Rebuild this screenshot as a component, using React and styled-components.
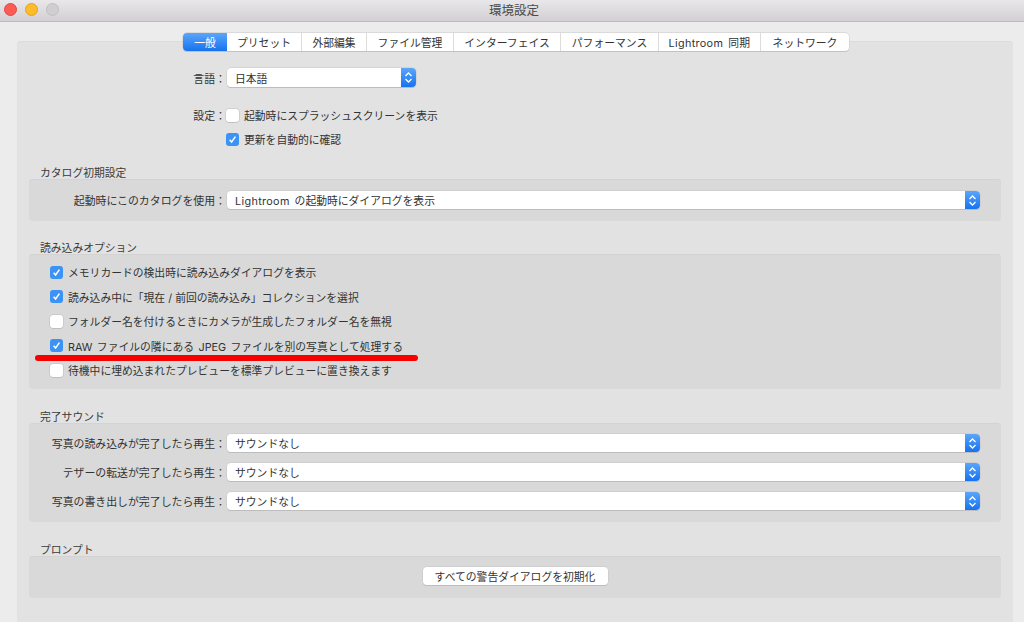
import React from 'react';
import styled, { createGlobalStyle } from 'styled-components';

const GlobalStyle = createGlobalStyle`
  html, body {
    margin: 0;
    padding: 0;
    background: #ececec;
  }
  * {
    box-sizing: border-box;
  }
`;

const fontStack = `'Inter', 'Noto Sans CJK JP', sans-serif`;

const Window = styled.div`
  display: flex;
  flex-direction: column;
  width: 1024px;
  height: 622px;
  overflow: hidden;
  background: #ececec;
  font-family: ${fontStack};
  font-size: 10.8px;
  color: #3a3a3a;
`;

const TitleBar = styled.header`
  display: grid;
  grid-template-columns: 1fr auto 1fr;
  align-items: center;
  flex: none;
  height: 22px;
  padding: 0 0 2px 4px;
  background: linear-gradient(#e9e7e9, #d2d0d2);
  border-bottom: 1px solid #bdbbbd;
`;

const Lights = styled.div`
  display: flex;
  gap: 8px;
`;

const Light = styled.span`
  width: 13px;
  height: 13px;
  border-radius: 50%;
  background: ${(p) => p.$color};
  border: 1px solid ${(p) => p.$edge};
`;

const Title = styled.div`
  font-size: 12.5px;
  color: #4a4a4a;
`;

const Body = styled.div`
  display: flex;
  flex: 1;
  flex-direction: column;
  align-items: center;
  padding: 11px 11px 0 17px;
`;

const Tabs = styled.nav`
  position: relative;
  z-index: 1;
  display: flex;
  flex: none;
  height: 18px;
  margin: 0 0 -10px 2px;
  background: #fff;
  border-radius: 4px;
  box-shadow: 0 0 0 0.5px #c8c8c8, 0 1px 0 #bdbdbd;
`;

const Tab = styled.div`
  display: flex;
  align-items: center;
  justify-content: center;
  width: ${(p) => p.$w}px;
  font-size: 10.8px;
  white-space: pre;
  color: ${(p) => (p.$active ? '#fff' : '#333')};
  background: ${(p) => (p.$active ? 'linear-gradient(#5ba6fb, #1672ef)' : 'transparent')};
  border-right: ${(p) => (p.$active ? 'none' : '1px solid #dcdcdc')};
  border-radius: ${(p) => (p.$active ? '4px 0 0 4px' : '0')};

  &:last-child {
    border-right: none;
  }
`;

const Latin = styled.span`
  letter-spacing: 0.35px;
  word-spacing: 1.5px;
`;

const Panel = styled.main`
  display: flex;
  flex: 1;
  flex-direction: column;
  align-self: stretch;
  padding: 27px 12px 0;
  background: #e2e2e2;
  border-radius: 4px 4px 0 0;
  box-shadow: inset 0 1px 0 #dcdcdc;
`;

const GeneralBlock = styled.section`
  display: flex;
  flex-direction: column;
  margin-bottom: 16px;
`;

const FormRow = styled.div`
  display: flex;
  align-items: center;
  gap: ${(p) => p.$gap ?? 1}px;
  height: ${(p) => p.$h || 18}px;
  margin-top: ${(p) => p.$top || 0}px;
`;

const FieldLabel = styled.label`
  flex: none;
  width: 197px;
  font-size: 10.9px;
  text-align: right;
  white-space: nowrap;
  color: #333;
`;

const SectionTitle = styled.h2`
  height: 14px;
  margin: ${(p) => p.$top || 0}px 0 0 11px;
  font-size: 10.8px;
  font-weight: 400;
  line-height: 18px;
  color: #3a3a3a;
`;

const Group = styled.div`
  display: flex;
  flex-direction: column;
  gap: ${(p) => p.$gap || 0}px;
  height: ${(p) => p.$h}px;
  padding: ${(p) => p.$pad || '12px 21px 0 0'};
  background: #d9d9d9;
  border-radius: 4px;
  box-shadow: inset 0 1px 0 #d3d3d3;
`;

const SelectBox = styled.div`
  display: flex;
  align-items: center;
  justify-content: space-between;
  flex: ${(p) => (p.$fixed ? 'none' : 1)};
  width: ${(p) => (p.$fixed ? '189px' : 'auto')};
  height: ${(p) => p.$h || 18}px;
  padding-left: 8px;
  overflow: hidden;
  background: #fff;
  border-radius: 4px;
  box-shadow: 0 0 0 0.5px #c6c6c6, 0 1px 0 #b5b5b5;
  color: #333;
  font-size: 10.8px;
`;

const Stepper = styled.span`
  display: flex;
  align-items: center;
  justify-content: center;
  flex: none;
  width: 15px;
  height: 100%;
  background: linear-gradient(#5ba6fb, #1672ef);
`;

const CheckRow = styled.label`
  position: relative;
  display: flex;
  align-items: center;
  gap: 5px;
  height: 20px;
  white-space: nowrap;
  word-spacing: ${(p) => p.$wordGap || 0}px;
  color: #333;
`;

const Box = styled.span`
  display: flex;
  align-items: center;
  justify-content: center;
  flex: none;
  width: 13px;
  height: 13px;
  border-radius: 3px;
  background: ${(p) => (p.$on ? '#3b93f5' : '#fff')};
  box-shadow: ${(p) => (p.$on ? 'none' : '0 0 0 0.5px #bdbdbd, 0 0.5px 0 #aaa')};
`;

const SettingsChecks = styled.div`
  display: flex;
  flex-direction: column;
  margin: 4px 0 0 197px;
`;

const RedMark = styled.span`
  position: absolute;
  left: -15px;
  top: 19px;
  width: 383px;
  height: 6px;
  border-radius: 3px;
  background: #f60000;
`;

const ButtonRow = styled.div`
  display: flex;
  justify-content: center;
`;

const PushButton = styled.button`
  width: 185px;
  height: 18px;
  padding: 0;
  background: #fff;
  border: none;
  border-radius: 4px;
  box-shadow: 0 0 0 0.5px #c6c6c6, 0 1px 0 #b5b5b5;
  font-family: inherit;
  font-size: 10.8px;
  color: #333;
`;

const tabs = [
  ['一般', 44, true],
  ['プリセット', 75],
  ['外部編集', 65],
  ['ファイル管理', 87],
  ['インターフェイス', 107],
  ['パフォーマンス', 98],
  [<Latin key="sync">Lightroom 同期</Latin>, 102],
  ['ネットワーク', 88],
];

const importOptions = [
  ['メモリカードの検出時に読み込みダイアログを表示', true],
  ['読み込み中に「現在 / 前回の読み込み」コレクションを選択', true],
  ['フォルダー名を付けるときにカメラが生成したフォルダー名を無視', false],
  ['RAW ファイルの隣にある JPEG ファイルを別の写真として処理する', true, true],
  ['待機中に埋め込まれたプレビューを標準プレビューに置き換えます', false],
];

const sounds = [
  '写真の読み込みが完了したら再生：',
  'テザーの転送が完了したら再生：',
  '写真の書き出しが完了したら再生：',
];

function Check({ on, children, mark }) {
  return (
    <CheckRow $wordGap={mark ? 1.4 : 0}>
      <Box $on={on}>
        {on && (
          <svg width="9" height="9" viewBox="0 0 9 9" fill="none">
            <path d="M1.6 4.8 L3.6 7 L7.4 1.6" stroke="#fff" strokeWidth="1.5" />
          </svg>
        )}
      </Box>
      {children}
      {mark && <RedMark />}
    </CheckRow>
  );
}

function Select({ children, fixed, h }) {
  return (
    <SelectBox $fixed={fixed} $h={h}>
      <span>{children}</span>
      <Stepper>
        <svg width="9" height="13" viewBox="0 0 9 13" fill="none" stroke="#fff" strokeWidth="1.3">
          <path d="M1.5 5 L4.5 2 L7.5 5" />
          <path d="M1.5 8 L4.5 11 L7.5 8" />
        </svg>
      </Stepper>
    </SelectBox>
  );
}

export default function App() {
  return (
    <Window>
      <GlobalStyle />
      <TitleBar>
        <Lights>
          <Light $color="#fc5b57" $edge="#e5473f" />
          <Light $color="#fdbc2e" $edge="#e3a21f" />
          <Light $color="#cfcfcf" $edge="#c0c0c0" />
        </Lights>
        <Title>環境設定</Title>
      </TitleBar>
      <Body>
        <Tabs>
          {tabs.map(([name, w, active], i) => (
            <Tab key={i} $w={w} $active={active}>
              {name}
            </Tab>
          ))}
        </Tabs>
        <Panel>
          <GeneralBlock>
            <FormRow $h={19}>
              <FieldLabel>言語：</FieldLabel>
              <Select fixed h={19}>日本語</Select>
            </FormRow>
            <FormRow $h={20} $top={18} $gap={0}>
              <FieldLabel>設定：</FieldLabel>
              <Check>起動時にスプラッシュスクリーンを表示</Check>
            </FormRow>
            <SettingsChecks>
              <Check on>更新を自動的に確認</Check>
            </SettingsChecks>
          </GeneralBlock>

          <SectionTitle>カタログ初期設定</SectionTitle>
          <Group $h={42}>
            <FormRow>
              <FieldLabel>起動時にこのカタログを使用：</FieldLabel>
              <Select><Latin>Lightroom </Latin>の起動時にダイアログを表示</Select>
            </FormRow>
          </Group>

          <SectionTitle $top={19}>読み込みオプション</SectionTitle>
          <Group $h={135} $gap={4.5} $pad="8px 21px 0">
            {importOptions.map(([text, on, mark]) => (
              <Check key={text} on={on} mark={mark}>
                {text}
              </Check>
            ))}
          </Group>

          <SectionTitle $top={20}>完了サウンド</SectionTitle>
          <Group $h={99} $gap={11} $pad="11px 21px 0 0">
            {sounds.map((label) => (
              <FormRow key={label}>
                <FieldLabel>{label}</FieldLabel>
                <Select>サウンドなし</Select>
              </FormRow>
            ))}
          </Group>

          <SectionTitle $top={20}>プロンプト</SectionTitle>
          <Group $h={42} $pad="11px 0 0">
            <ButtonRow>
              <PushButton>すべての警告ダイアログを初期化</PushButton>
            </ButtonRow>
          </Group>
        </Panel>
      </Body>
    </Window>
  );
}
